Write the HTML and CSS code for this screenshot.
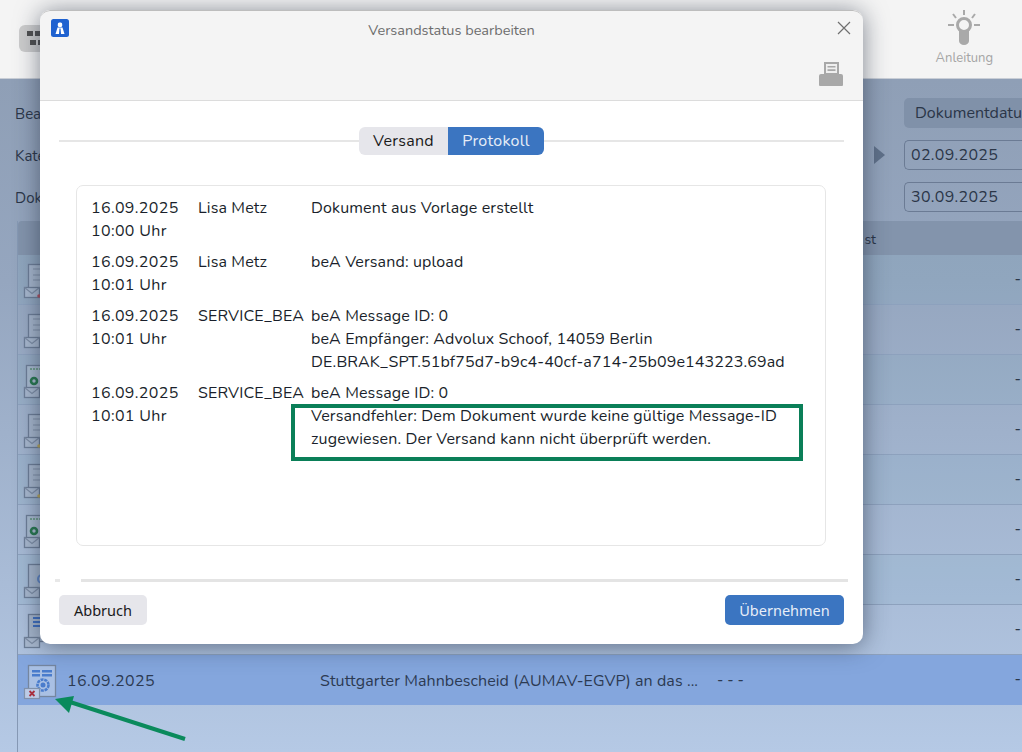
FILE: index.html
```html
<!DOCTYPE html>
<html lang="de">
<head>
<meta charset="utf-8">
<title>Versandstatus bearbeiten</title>
<link rel="stylesheet" href="styles.css">
</head>
<body>
<div class="page">
  <header class="topbar">
    <div class="app-btn">
      <svg width="26" height="18" viewBox="0 0 26 18"><g fill="#505050"><rect x="2" y="2" width="6" height="5"/><rect x="10" y="2" width="6" height="5"/><rect x="18" y="2" width="6" height="5"/><rect x="5" y="11" width="6" height="5"/><rect x="13" y="11" width="6" height="5"/></g></svg>
    </div>
    <div class="help">
      <svg width="34" height="36" viewBox="0 0 34 36" fill="none" stroke="#a9a9a9" stroke-width="2"><circle cx="17" cy="16" r="6.500" stroke-width="3"/><path d="M12 21h10v11a5 4 0 0 1-10 0z" fill="#a9a9a9" stroke="none"/><path d="M17 1v5M6 5l3 4M28 5l-3 4M1 16h6M27 16h6"/></svg>
      <span>Anleitung</span>
    </div>
  </header>
  <main class="content">
    <div class="filters">
      <div class="filter-labels"><span>Bearbeiter</span><span>Kategorie</span><span>Dokument</span></div>
      <div class="filter-right">
        <svg class="arrow" width="11" height="18" viewBox="0 0 11 18"><path d="M0 0l11 9-11 9z" fill="#5f7089"/></svg>
        <div class="filter-fields">
          <div class="select">Dokumentdatum</div>
          <div class="date">02.09.2025</div>
          <div class="date">30.09.2025</div>
        </div>
      </div>
    </div>
    <div class="table">
      <div class="thead"><span class="th-st">st</span></div>
      <div class="row"><svg class="ic" width="44" height="49" viewBox="0 0 44 49"><use href="#doc"/><circle cx="21" cy="41" r="1.800" fill="#b0505f"/></svg><span class="dash">-</span></div>
      <div class="row"><svg class="ic" width="44" height="49" viewBox="0 0 44 49"><use href="#doc"/></svg><span class="dash">-</span></div>
      <div class="row"><svg class="ic" width="44" height="49" viewBox="0 0 44 49"><use href="#doce"/></svg><span class="dash">-</span></div>
      <div class="row"><svg class="ic" width="44" height="49" viewBox="0 0 44 49"><use href="#doc"/><circle cx="21" cy="41" r="1.800" fill="#b9a75a"/></svg><span class="dash">-</span></div>
      <div class="row"><svg class="ic" width="44" height="49" viewBox="0 0 44 49"><use href="#doc"/><circle cx="21" cy="41" r="1.800" fill="#b9a75a"/></svg><span class="dash">-</span></div>
      <div class="row"><svg class="ic" width="44" height="49" viewBox="0 0 44 49"><use href="#doce"/></svg><span class="dash">-</span></div>
      <div class="row"><svg class="ic" width="44" height="49" viewBox="0 0 44 49"><use href="#doc0"/><circle cx="24" cy="24" r="4" fill="none" stroke="#5f86c6" stroke-width="2"/><use href="#env"/></svg><span class="dash">-</span></div>
      <div class="row"><svg class="ic" width="44" height="49" viewBox="0 0 44 49"><use href="#doc0"/><path d="M15 13h9M15 17h9M15 21h9" stroke="#3f6fc0" stroke-width="2"/><use href="#env"/></svg><span class="dash">-</span></div>
      <div class="row selected">
        <svg class="ic" width="44" height="49" viewBox="0 0 44 49">
          <rect x="10.500" y="9.500" width="27" height="31" fill="#a9c0e4" stroke="#75869f" stroke-width="1.300"/>
          <path d="M14 14h8v2.500h-8zM24 14h10v2.500h-10zM14 18h8v2.500h-8zM24 18h10v2.500h-10z" fill="#4a7ccc"/>
          <circle cx="25" cy="29" r="5.500" fill="none" stroke="#4a7ccc" stroke-width="2.600" stroke-dasharray="3 .8"/>
          <circle cx="25" cy="29" r="2.500" fill="#4a7ccc"/>
          <rect x="6.500" y="32.500" width="15" height="10" fill="#bccbe6" stroke="#8191aa" stroke-width="1.200"/>
          <path d="M11.500 35l5 5M16.500 35l-5 5" stroke="#a8303f" stroke-width="1.800"/>
        </svg>
        <span class="r-date">16.09.2025</span>
        <span class="r-title">Stuttgarter Mahnbescheid (AUMAV-EGVP) an das ...</span>
        <span class="r-dashes">- - -</span>
        <span class="dash">-</span>
      </div>
      <div class="row-empty"></div>
    </div>
  </main>
</div>

<svg class="defs" width="0" height="0">
  <defs>
    <g id="env"><rect x="6.500" y="32.500" width="15" height="10" fill="#a9b9cf" stroke="#6d7e97" stroke-width="1.300"/><path d="M6.500 32.500l7.500 6 7.500-6" fill="none" stroke="#7d8da5" stroke-width="1.100"/></g>
    <g id="doc0"><rect x="10.500" y="9.500" width="27" height="27" fill="#a6b6cc" stroke="#6d7e97" stroke-width="1.300"/></g>
    <g id="doc"><use href="#doc0"/><path d="M15 14h20M15 20h20M15 25h20" stroke="#8c9cb2" stroke-width="1.300"/><use href="#env"/></g>
    <g id="doce"><rect x="8.500" y="10.500" width="27" height="27" fill="#a9bacf" stroke="#6d7e97" stroke-width="1.300"/><path d="M12 14h10" stroke="#5d9478" stroke-width="1.500" stroke-dasharray="2 1"/><circle cx="16" cy="26" r="3" fill="none" stroke="#27784f" stroke-width="2.600"/><use href="#env"/></g>
  </defs>
</svg>

<div class="dialog">
  <div class="dlg-head">
    <div class="dlg-titlebar">
      <svg class="dlg-logo" width="18" height="18" viewBox="0 0 18 18"><rect width="18" height="18" rx="2.500" fill="#1f62d0"/><rect x="6.800" y="3.500" width="4.400" height="4.500" rx="1.500" fill="#fff"/><path d="M6.500 8.500h5l2 6.500h-9z" fill="#fff"/><path d="M8.500 9.500h1l.5 5.500H8z" fill="#1f62d0"/></svg>
      <span class="dlg-title">Versandstatus bearbeiten</span>
      <svg class="dlg-close" width="14" height="14" viewBox="0 0 14 14"><path d="M1 1l12 12M13 1L1 13" stroke="#6f6f6f" stroke-width="1.200" fill="none"/></svg>
    </div>
    <div class="dlg-tools">
      <svg width="26" height="26" viewBox="0 0 26 26"><path d="M6 1h15v13H6z" fill="#a8a8a8"/><path d="M8 3h11v9H8z" fill="#efefef"/><path d="M9.500 5h8v1.600h-8zM9.500 8.300h8v1.600h-8z" fill="#a8a8a8"/><path d="M3 13h20a2 2 0 0 1 2 2v9a1 1 0 0 1-1 1H2a1 1 0 0 1-1-1v-9a2 2 0 0 1 2-2z" fill="#a8a8a8"/></svg>
    </div>
  </div>
  <div class="dlg-body">
    <div class="tabs">
      <span class="tab">Versand</span>
      <span class="tab active">Protokoll</span>
    </div>
    <div class="log">
      <div class="log-entry">
        <div class="l-when">16.09.2025<br>10:00 Uhr</div>
        <div class="l-user">Lisa Metz</div>
        <div class="l-text">Dokument aus Vorlage erstellt</div>
      </div>
      <div class="log-entry">
        <div class="l-when">16.09.2025<br>10:01 Uhr</div>
        <div class="l-user">Lisa Metz</div>
        <div class="l-text">beA Versand: upload</div>
      </div>
      <div class="log-entry">
        <div class="l-when">16.09.2025<br>10:01 Uhr</div>
        <div class="l-user">SERVICE_BEA</div>
        <div class="l-text">beA Message ID: 0<br>beA Empfänger: Advolux Schoof, 14059 Berlin<br>DE.BRAK_SPT.51bf75d7-b9c4-40cf-a714-25b09e143223.69ad</div>
      </div>
      <div class="log-entry">
        <div class="l-when">16.09.2025<br>10:01 Uhr</div>
        <div class="l-user">SERVICE_BEA</div>
        <div class="l-text">beA Message ID: 0<br>Versandfehler: Dem Dokument wurde keine gültige Message-ID<br>zugewiesen. Der Versand kann nicht überprüft werden.</div>
      </div>
    </div>
    <div class="scroll"><span class="scroll-dot"></span><span class="scroll-line"></span></div>
    <div class="dlg-foot">
      <button class="btn">Abbruch</button>
      <button class="btn primary">Übernehmen</button>
    </div>
  </div>
</div>

<div class="highlight"></div>
<svg class="pointer" width="150" height="60" viewBox="0 0 150 60"><path d="M130 45L15 8" stroke="#0a8a5c" stroke-width="4" fill="none"/><path d="M0 5L19 2L14 19z" fill="#0a8a5c"/></svg>
</body>
</html>
```
FILE: styles.css
```css
* { box-sizing: border-box; }
html, body { margin: 0; height: 100%; overflow: hidden; }
body { font-family: "Nunito", "Noto Sans", sans-serif; font-size: 15px; color: #111; position: relative; background: #b3c6e0; }
.defs { position: absolute; }

.page { height: 752px; display: flex; flex-direction: column; }
.topbar { height: 79px; flex: none; background: #f4f4f4; border-bottom: 1px solid #c9ced6; display: flex; align-items: flex-start; justify-content: space-between; padding: 25px 29px 0 19px; position: relative; }
.app-btn { width: 46px; height: 27px; background: #cccccc; border-radius: 6px; }
.app-btn svg { display: block; margin: 4px 0 0 6px; }
.help { display: flex; flex-direction: column; align-items: center; margin-top: -16px; color: #a5a5a5; font-size: 13px; gap: 4px; }

.content { flex: 1; background: linear-gradient(180deg, #8f9fb6 0%, #95a6bf 30%, #a9bcd7 75%, #b5c9e5 100%); padding: 19px 0 0 15px; display: flex; flex-direction: column; color: #2b3648; }
.filters { height: 123px; display: flex; justify-content: space-between; flex: none; }
.filter-labels { display: flex; flex-direction: column; gap: 21px; padding-top: 6px; font-size: 15px; }
.filter-labels span { line-height: 21px; height: 21px; }
.filter-right { display: flex; gap: 19px; align-items: flex-start; }
.arrow { margin-top: 48px; }
.filter-fields { width: 118px; display: flex; flex-direction: column; gap: 12px; }
.select { height: 30px; background: #8091a9; border-radius: 5px 0 0 5px; padding-left: 11px; line-height: 31px; white-space: nowrap; font-size: 16px; }
.date { height: 30px; border: 1px solid #6b7b94; border-right: 0; border-radius: 5px 0 0 5px; padding-left: 6px; line-height: 28px; font-size: 16px; letter-spacing: .3px; }

.table { margin-left: 2px; flex: 1; display: flex; flex-direction: column; border-left: 1px solid #8598b4; }
.thead { height: 34px; background: #8394ac; border-radius: 4px 0 0 0; position: relative; flex: none; }
.th-st { position: absolute; right: 146px; top: 9px; font-size: 14px; }
.row { height: 50px; flex: none; display: flex; align-items: center; border-bottom: 1px solid #8da1bd; position: relative; }
.row:nth-child(even) { background: rgba(105,165,190,.1); }
.row .ic { flex: none; }
.dash { position: absolute; right: 1px; top: 14px; font-weight: 600; }
.row.selected { background: #84a6dd; border: 0; }
.r-date { position: absolute; left: 49px; top: 15px; font-size: 16px; color: #2c3a52; letter-spacing: .4px; }
.r-title { position: absolute; left: 302px; top: 15px; font-size: 16px; color: #2c3a52; white-space: nowrap; letter-spacing: .08px; }
.r-dashes { position: absolute; left: 699px; top: 15px; color: #2c3a52; }
.row-empty { flex: 1; }

.dialog { position: absolute; left: 40px; top: 10px; width: 823px; height: 634px; background: #fff; border-radius: 10px; box-shadow: 0 2px 24px rgba(30,40,60,.55); display: flex; flex-direction: column; overflow: hidden; }
.dlg-head { height: 91px; flex: none; background: #f4f4f4; border-bottom: 1px solid #dcdcdc; border-radius: 10px 10px 0 0; border-top: 1px solid #bdbdbd; }
.dlg-titlebar { display: flex; align-items: center; justify-content: space-between; padding: 8px 12px 0 11px; position: relative; }
.dlg-title { position: absolute; left: 0; right: 0; top: 9px; text-align: center; font-size: 14.500px; color: #6d6d6d; }
.dlg-tools { display: flex; justify-content: flex-end; padding: 24px 19px 0 0; }
.dlg-body { flex: 1; display: flex; flex-direction: column; padding: 0 19px; }
.tabs { margin-top: 26px; height: 28px; flex: none; display: flex; justify-content: center; background: linear-gradient(#e6e6e6,#e6e6e6) center 13px / 100% 2px no-repeat; }
.tab { height: 28px; line-height: 28px; width: 89px; text-align: center; background: #e6e6eb; border-radius: 6px 0 0 6px; font-size: 16px; color: #1a1a1a; letter-spacing: .3px; }
.tab.active { background: #3b75c1; color: #e6edf7; border-radius: 0 6px 6px 0; width: 96px; }
.log { margin: 30px 18px 0 17px; height: 361px; flex: none; border: 1px solid #e6e6e6; border-radius: 7px; padding: 11px 14px 10px; font-size: 16px; line-height: 23px; letter-spacing: .13px; }
.log-entry { display: grid; grid-template-columns: 107px 113px 1fr; margin-bottom: 8px; color: #1a1f2b; white-space: nowrap; }
.l-when { letter-spacing: .35px; }
.scroll { margin: 33px -4px 0; height: 3px; flex: none; display: flex; gap: 21px; align-items: center; }
.scroll-dot { width: 5px; height: 3px; background: #e8e8e8; }
.scroll-line { flex: 1; height: 3px; background: #e4e4e4; }
.dlg-foot { display: flex; justify-content: space-between; margin-top: 13px; }
.btn { height: 30px; border: 0; border-radius: 5px; background: #e6e6eb; font-family: "Noto Sans", sans-serif; font-size: 14.500px; color: #1a1a1a; width: 88px; padding: 0; }
.btn.primary { background: #3b75c1; color: #e8eef8; width: 119px; }

.highlight { position: absolute; left: 291px; top: 404px; width: 512px; height: 57px; border: 4px solid #0a7f58; }
.pointer { position: absolute; left: 55px; top: 694px; }
```
